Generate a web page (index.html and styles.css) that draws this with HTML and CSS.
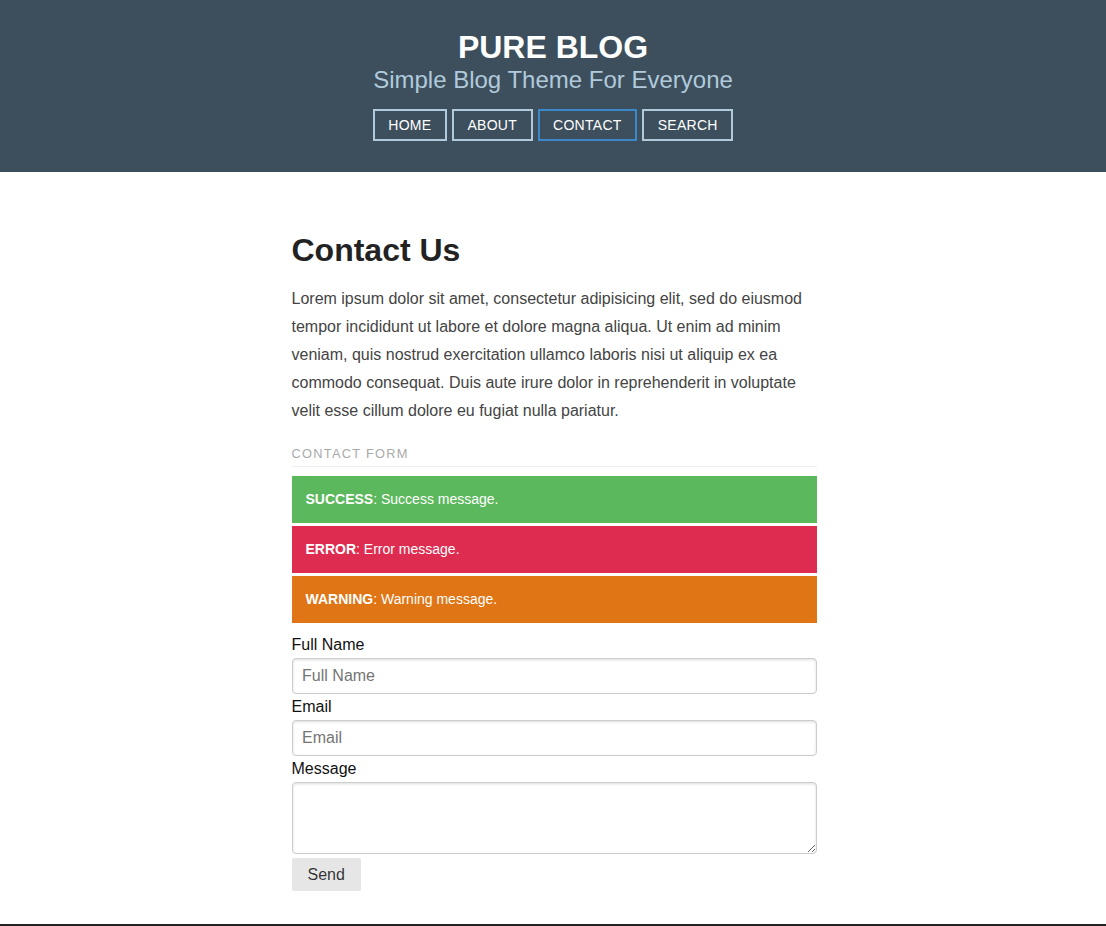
FILE: index.html
```html
<!DOCTYPE html>
<html lang="en">
<head>
<meta charset="utf-8">
<title>Pure Blog - Contact</title>
<link rel="stylesheet" href="styles.css">
</head>
<body>
<header class="site-header">
  <h1 class="brand-title">Pure Blog</h1>
  <h2 class="brand-tagline">Simple Blog Theme For Everyone</h2>
  <nav class="nav">
    <a class="nav-link" href="#">Home</a>
    <a class="nav-link" href="#">About</a>
    <a class="nav-link nav-link-active" href="#">Contact</a>
    <a class="nav-link" href="#">Search</a>
  </nav>
</header>
<main class="content">
  <h1 class="page-title">Contact Us</h1>
  <p class="page-text">Lorem ipsum dolor sit amet, consectetur adipisicing elit, sed do eiusmod tempor incididunt ut labore et dolore magna aliqua. Ut enim ad minim veniam, quis nostrud exercitation ullamco laboris nisi ut aliquip ex ea commodo consequat. Duis aute irure dolor in reprehenderit in voluptate velit esse cillum dolore eu fugiat nulla pariatur.</p>
  <h2 class="content-subhead">Contact Form</h2>
  <div class="alert alert-success"><strong>SUCCESS</strong>: Success message.</div>
  <div class="alert alert-error"><strong>ERROR</strong>: Error message.</div>
  <div class="alert alert-warning"><strong>WARNING</strong>: Warning message.</div>
  <form class="form">
    <fieldset class="fieldset">
      <label class="label" for="name">Full Name</label>
      <input class="input" id="name" type="text" placeholder="Full Name">
      <label class="label" for="email">Email</label>
      <input class="input" id="email" type="email" placeholder="Email">
      <label class="label" for="message">Message</label>
      <textarea class="input textarea" id="message"></textarea>
      <button class="button" type="button">Send</button>
    </fieldset>
  </form>
</main>
<footer class="footer"></footer>
</body>
</html>
```
FILE: styles.css
```css
* { box-sizing: border-box; }
html, body { margin: 0; padding: 0; }
body {
  font-family: "Liberation Sans", Arial, sans-serif;
  color: #222;
  background: #fff;
}
.site-header {
  background: rgb(61, 79, 93);
  text-align: center;
  padding: 29px 0 31px;
}
.brand-title {
  margin: 0;
  font-size: 32px;
  font-weight: 700;
  line-height: 37px;
  text-transform: uppercase;
  color: #fff;
}
.brand-tagline {
  margin: 0;
  font-size: 24px;
  font-weight: 300;
  line-height: 28px;
  color: rgb(176, 202, 219);
}
.nav {
  display: flex;
  justify-content: center;
  gap: 5px;
  margin-top: 15px;
}
.nav-link {
  display: inline-block;
  border: 2px solid rgb(176, 202, 219);
  color: #fff;
  text-decoration: none;
  text-transform: uppercase;
  font-size: 14px;
  letter-spacing: 0.02em;
  line-height: 14px;
  padding: 7px 13.5px;
}
.nav-link-active {
  border-color: rgb(59, 137, 200);
}
.content {
  width: 527px;
  margin: 0 auto;
  padding: 60px 0 21px 2px;
}
.page-title {
  margin: 0 0 16px;
  font-size: 32px;
  line-height: 37px;
  font-weight: 700;
  color: #222;
}
.page-text {
  margin: 0 0 16px;
  font-size: 16px;
  line-height: 28px;
  color: #444;
}
.content-subhead {
  margin: 0 0 9px;
  padding: 5px 0;
  font-size: 12.8px;
  line-height: 15px;
  font-weight: 400;
  letter-spacing: 0.1em;
  text-transform: uppercase;
  color: #aaa;
  border-bottom: 1px solid #eee;
}
.alert {
  color: #fff;
  font-size: 14px;
  line-height: 17px;
  padding: 15px 14px;
  margin-bottom: 3px;
}
.alert-success { background: #5cb85c; }
.alert-error { background: #dd2c50; }
.alert-warning { background: #df7514; }
.form { margin: 0; }
.fieldset {
  border: 0;
  margin: 0;
  padding: 5.6px 0 12px;
  display: flex;
  flex-direction: column;
  align-items: flex-start;
}
.label {
  font-size: 16px;
  line-height: 18px;
  color: #111;
  margin: 4px 0 4px;
}
.input {
  width: 100%;
  font-family: inherit;
  font-size: 16px;
  line-height: 18px;
  padding: 8px 9.6px;
  border: 1px solid #ccc;
  border-radius: 4px;
  box-shadow: inset 0 1px 3px #ddd;
  color: #222;
  margin: 0;
}
.input::placeholder { color: #757575; }
.textarea {
  height: 72px;
  resize: vertical;
}
.button {
  margin-top: 4px;
  font-family: inherit;
  font-size: 16px;
  line-height: 17px;
  padding: 8px 16px;
  background: #e6e6e6;
  color: rgba(0, 0, 0, 0.8);
  border: 0;
  border-radius: 2px;
}
.footer {
  background: #222;
  height: 40px;
}
```
